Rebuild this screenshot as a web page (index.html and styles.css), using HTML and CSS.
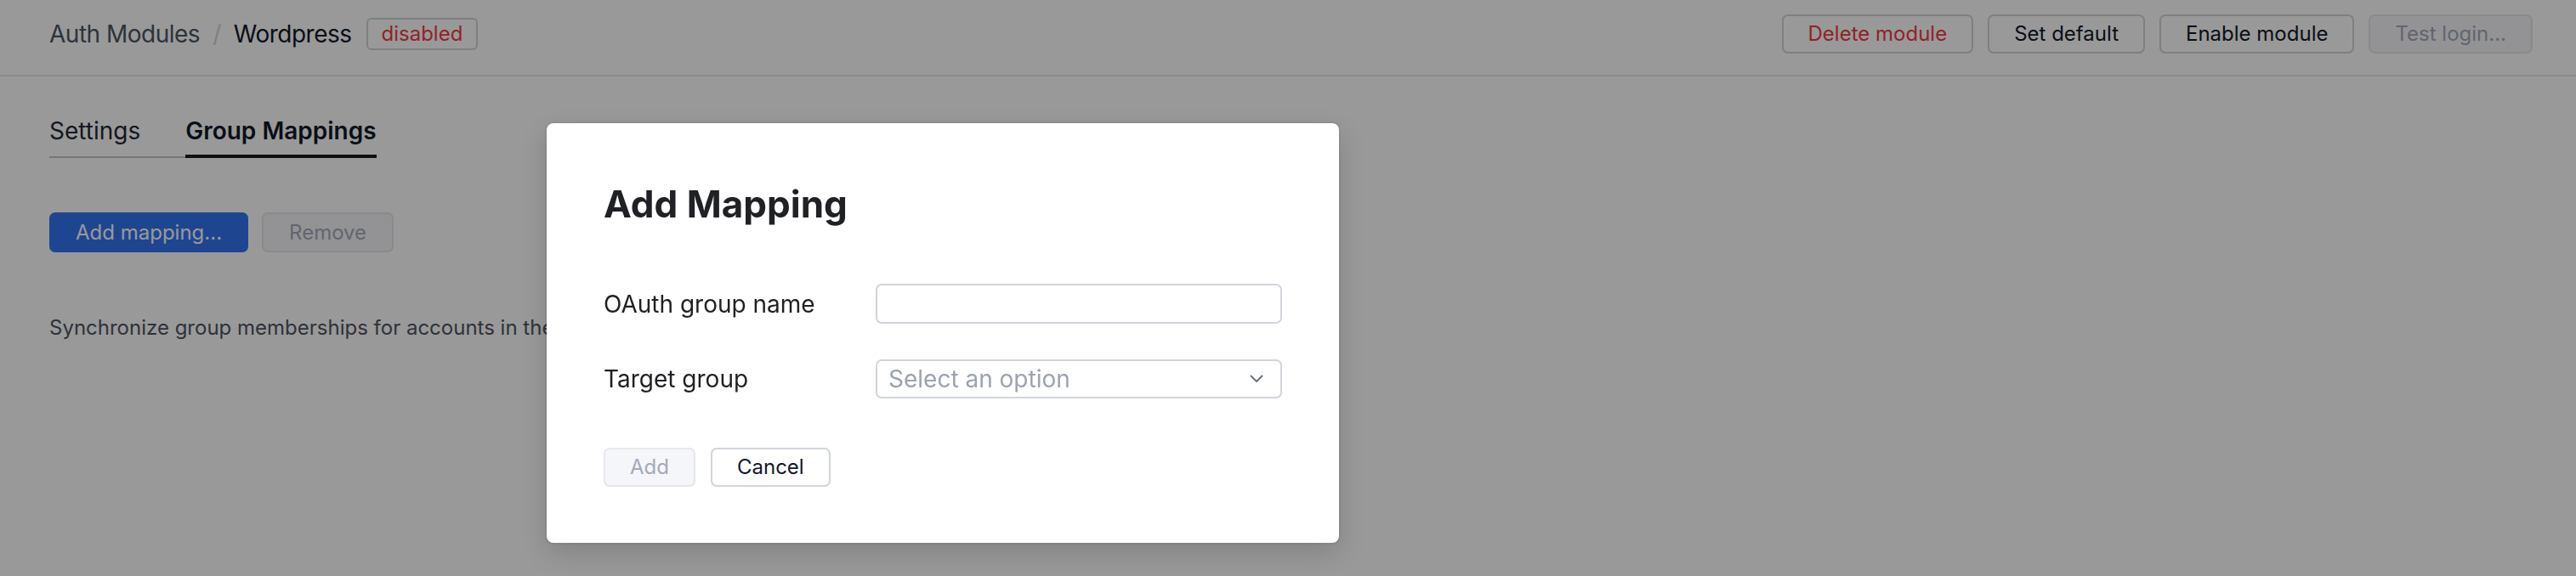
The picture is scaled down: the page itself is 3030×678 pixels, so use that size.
FILE: index.html
```html
<!DOCTYPE html>
<html>
<head>
    <title>Auth Modules / Wordpress</title>
    <link rel="stylesheet" href="styles.css">
</head>
<body>
    <header class="topbar">
        <div class="crumbs">
            <a class="crumb" href="#">Auth Modules</a>
            <span class="sep">/</span>
            <span class="current">Wordpress</span>
            <span class="badge">disabled</span>
        </div>
        <div class="actions">
            <button class="btn danger">Delete module</button>
            <button class="btn">Set default</button>
            <button class="btn">Enable module</button>
            <button class="btn" disabled>Test login...</button>
        </div>
    </header>

    <main class="content">
        <nav class="tabs">
            <a class="tab" href="#">Settings</a>
            <a class="tab active" href="#">Group Mappings</a>
        </nav>

        <div class="toolbar">
            <button class="btn primary">Add mapping...</button>
            <button class="btn" disabled>Remove</button>
        </div>

        <p class="hint">Synchronize group memberships for accounts in the OAuth provider with local groups.</p>
    </main>

    <div class="backdrop"></div>

    <div class="dialog">
        <h2>Add Mapping</h2>
        <div class="form">
            <label class="label" for="oauthGroup">OAuth group name</label>
            <input id="oauthGroup" class="field" type="text">

            <label class="label" for="targetGroup">Target group</label>
            <div class="select">
                <span class="placeholder">Select an option</span>
                <svg width="16" height="10" viewBox="0 0 16 10"><path d="M1.5 1.5 8 8l6.5-6.5" fill="none" stroke="#6b7280" stroke-width="2" stroke-linecap="round" stroke-linejoin="round"/></svg>
            </div>
        </div>
        <div class="dialog-buttons">
            <button class="btn" disabled>Add</button>
            <button class="btn">Cancel</button>
        </div>
    </div>
</body>
</html>
```

FILE: styles.css
```css
body {
    margin: 0;
    font-family: Inter, "Liberation Sans", sans-serif;
    background: white;
    color: #111827;
}
.topbar {
    display: flex;
    justify-content: space-between;
    align-items: center;
    padding: 17px 51px 25px 58px;
    border-bottom: 2px solid #e5e7eb;
}
.crumbs {
    display: flex;
    align-items: center;
    font-size: 28px;
    letter-spacing: -0.5px;
}
.crumb {
    color: #4b5563;
    text-decoration: none;
}
.sep {
    color: #d1d5db;
    margin: 0 15px;
}
.current { color: #111827; }
.badge {
    margin-left: 17px;
    padding: 0 16px;
    height: 34px;
    line-height: 34px;
    border: 2px solid #d1d5db;
    border-radius: 6px;
    color: #f23a46;
    font-size: 24px;
    letter-spacing: 0;
}
.actions {
    display: flex;
    gap: 17px;
}
.actions .btn { padding: 5px 29px; }
.btn {
    font-family: inherit;
    font-size: 24px;
    line-height: 32px;
    padding: 5px 30px;
    background: white;
    color: #111827;
    border: 2px solid #d1d5db;
    border-radius: 7px;
    cursor: pointer;
}
.btn.danger { color: #f23a46; }
.btn.primary {
    background: #3274f0;
    border-color: #3274f0;
    color: white;
    padding: 6px 29px 5px;
}
.btn:disabled {
    background: #f5f6f9;
    border-color: #e5e7eb;
    color: #a3a9b8;
    cursor: default;
}
.content {
    padding: 47px 58px;
}
.tabs {
    display: inline-flex;
    gap: 53px;
    border-bottom: 2px solid #c4c6ca;
}
.tab {
    font-size: 28px;
    line-height: 34px;
    padding-bottom: 11px;
    margin-bottom: -2px;
    border-bottom: 4px solid transparent;
    color: #1f2937;
    text-decoration: none;
}
.tab.active {
    font-weight: 600;
    color: #111827;
    border-bottom-color: #1a1b20;
}
.toolbar {
    display: flex;
    gap: 16px;
    margin-top: 64px;
}
.toolbar .btn:disabled { padding-top: 6px; }
.hint {
    margin: 71px 0 0;
    font-size: 24px;
    line-height: 36px;
    color: #4b5563;
}
.backdrop {
    position: fixed;
    inset: 0;
    background: rgba(0, 0, 0, 0.4);
}
.dialog {
    position: absolute;
    left: 643px;
    top: 145px;
    width: 932px;
    box-sizing: border-box;
    padding: 68px 67px 66px;
    background: white;
    border-radius: 8px;
    box-shadow: 0 0 0 2px rgba(0, 0, 0, 0.05), 0 12px 32px rgba(0, 0, 0, 0.15);
}
.dialog h2 {
    margin: 0;
    font-size: 44px;
    font-weight: 700;
    color: #202124;
}
.form {
    display: grid;
    grid-template-columns: 320px 1fr;
    row-gap: 42px;
    align-items: center;
    margin-top: 67px;
}
.label {
    font-size: 28px;
    color: #1f2023;
}
.field, .select {
    box-sizing: border-box;
    height: 47px;
    border: 2px solid #d1d5db;
    border-radius: 7px;
    background: white;
    font-family: inherit;
    font-size: 28px;
}
.select {
    height: 46px;
    display: flex;
    align-items: center;
    justify-content: space-between;
    padding: 0 20px 0 13px;
}
.placeholder { color: #9ca3af; }
.dialog-buttons {
    display: flex;
    gap: 18px;
    margin-top: 58px;
}
.dialog-buttons .btn { padding: 5px 29px; }
```
